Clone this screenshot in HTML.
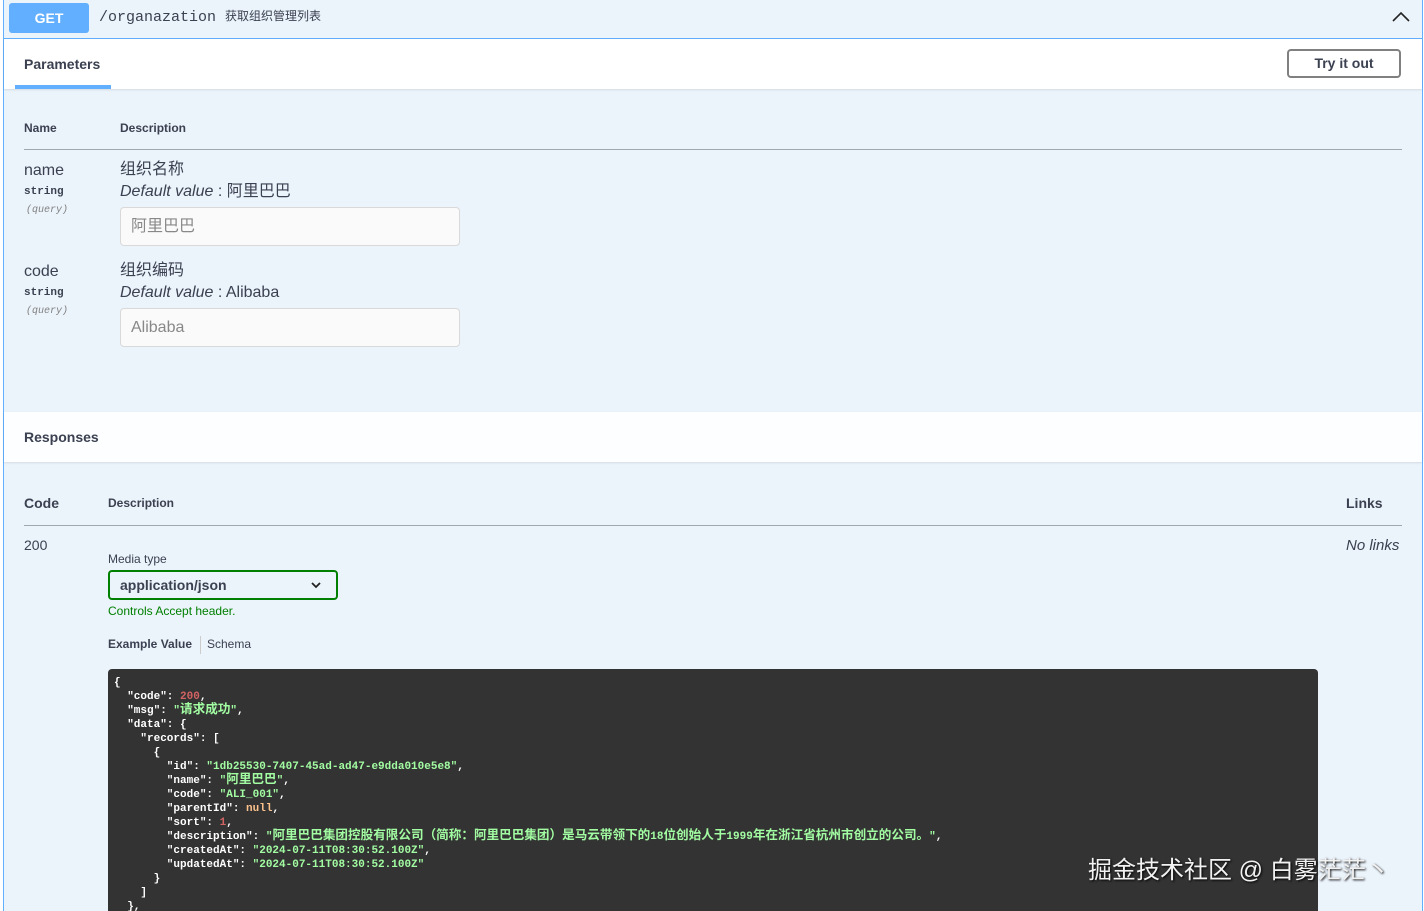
<!DOCTYPE html>
<html><head><meta charset="utf-8"><style>
*{margin:0;padding:0;box-sizing:border-box}
html,body{width:1424px;height:911px;overflow:hidden}
body{background:#fff;font-family:"Liberation Sans","Noto Sans CJK SC",sans-serif;color:#3b4151;position:relative}
.a{position:absolute;white-space:nowrap;line-height:1.15}
.ops{position:absolute;left:3px;top:0;width:1420px;height:911px;background:#ebf3fb;border-left:1px solid #61affe;border-right:1px solid #61affe}
.b{font-weight:bold}
.mono{font-family:"Liberation Mono","Noto Sans CJK SC",monospace}
pre{font-family:"Liberation Mono","Noto Sans CJK SC",monospace;font-size:11px;line-height:14px;font-weight:bold;color:#fff}
.s{color:#a2fca2}.n{color:#d36363}.nu{color:#fcc28c}
.c{font-size:12.6px;line-height:10px}
</style></head><body>
<div class="ops"></div>
<div class="a" style="left:4px;top:38px;width:1418px;height:1px;background:#61affe"></div>
<div class="a" style="left:9px;top:3px;width:80px;height:30px;background:#61affe;border-radius:3px;color:#fff;font-weight:bold;font-size:14px;text-align:center;line-height:30px">GET</div>
<div class="a mono" style="left:99px;top:9px;font-size:15px;color:#3b4151">/organazation</div>
<div class="a" style="left:225px;top:10px;font-size:12px;color:#3b4151">获取组织管理列表</div>
<svg class="a" style="left:1391px;top:10px" width="20" height="14" viewBox="0 0 20 14"><path d="M2 11 L10 3 L18 11" stroke="#222" stroke-width="1.6" fill="none"/></svg>
<div class="a" style="left:4px;top:39px;width:1418px;height:50px;background:#fff;box-shadow:0 1px 2px rgba(0,0,0,.1)"></div>
<div class="a b" style="left:24px;top:56px;font-size:14px">Parameters</div>
<div class="a" style="left:15px;top:85px;width:96px;height:4px;background:#61affe"></div>
<div class="a b" style="left:1287px;top:49px;width:114px;height:29px;border:2px solid #808080;border-radius:4px;font-size:14px;text-align:center;line-height:25px">Try it out</div>
<div class="a b" style="left:24px;top:122px;font-size:12px">Name</div>
<div class="a b" style="left:120px;top:122px;font-size:12px">Description</div>
<div class="a" style="left:24px;top:149px;width:1378px;height:1px;background:#a0a6b0"></div>
<div class="a" style="left:24px;top:162px;font-size:16px">name</div>
<div class="a mono b" style="left:24px;top:186px;font-size:11px">string</div>
<div class="a mono" style="left:26px;top:205px;font-size:10px;font-style:italic;color:#808080">(query)</div>
<div class="a" style="left:120px;top:161px;font-size:16px">组织名称</div>
<div class="a" style="left:120px;top:183px;font-size:16px"><i>Default value</i> : 阿里巴巴</div>
<div class="a" style="left:120px;top:207px;width:340px;height:39px;border:1px solid #d9d9d9;border-radius:4px;background:#fafafa;font-size:16px;color:#888;padding:10px 10px">阿里巴巴</div>
<div class="a" style="left:24px;top:263px;font-size:16px">code</div>
<div class="a mono b" style="left:24px;top:287px;font-size:11px">string</div>
<div class="a mono" style="left:26px;top:306px;font-size:10px;font-style:italic;color:#808080">(query)</div>
<div class="a" style="left:120px;top:262px;font-size:16px">组织编码</div>
<div class="a" style="left:120px;top:284px;font-size:16px"><i>Default value</i> : Alibaba</div>
<div class="a" style="left:120px;top:308px;width:340px;height:39px;border:1px solid #d9d9d9;border-radius:4px;background:#fafafa;font-size:16px;color:#888;padding:10px 10px">Alibaba</div>
<div class="a" style="left:4px;top:412px;width:1418px;height:50px;background:rgba(255,255,255,.85);box-shadow:0 1px 2px rgba(0,0,0,.1)"></div>
<div class="a b" style="left:24px;top:429px;font-size:14px">Responses</div>
<div class="a b" style="left:24px;top:495px;font-size:14px">Code</div>
<div class="a b" style="left:108px;top:497px;font-size:12px">Description</div>
<div class="a b" style="left:1346px;top:495px;font-size:14px">Links</div>
<div class="a" style="left:24px;top:525px;width:1378px;height:1px;background:#a0a6b0"></div>
<div class="a" style="left:24px;top:537px;font-size:14px">200</div>
<div class="a" style="left:1346px;top:537px;font-size:15px;font-style:italic">No links</div>
<div class="a" style="left:108px;top:553px;font-size:12px">Media type</div>
<div class="a b" style="left:108px;top:570px;width:230px;height:30px;border:2px solid #008000;border-radius:4px;font-size:14px;padding:4px 10px;line-height:18px">application/json</div>
<svg class="a" style="left:310px;top:580px" width="12" height="10" viewBox="0 0 12 10"><path d="M2 3 L6 7 L10 3" stroke="#222" stroke-width="1.8" fill="none"/></svg>
<div class="a" style="left:108px;top:605px;font-size:12px;color:#008000">Controls Accept header.</div>
<div class="a b" style="left:108px;top:638px;font-size:12px">Example Value</div>
<div class="a" style="left:200px;top:636px;width:1px;height:18px;background:#ccc"></div>
<div class="a" style="left:207px;top:638px;font-size:12px">Schema</div>
<div class="a" style="left:108px;top:669px;width:1210px;height:242px;overflow:hidden;background:#333;border-radius:4px 4px 0 0;padding:7px 6px">
<pre>{
  "code": <span class="n">200</span>,
  "msg": <span class="s">"<span class="c">请求成功</span>"</span>,
  "data": {
    "records": [
      {
        "id": <span class="s">"1db25530-7407-45ad-ad47-e9dda010e5e8"</span>,
        "name": <span class="s">"<span class="c">阿里巴巴</span>"</span>,
        "code": <span class="s">"ALI_001"</span>,
        "parentId": <span class="nu">null</span>,
        "sort": <span class="n">1</span>,
        "description": <span class="s">"<span class="c">阿里巴巴集团控股有限公司（简称：阿里巴巴集团）是马云带领下的</span>18<span class="c">位创始人于</span>1999<span class="c">年在浙江省杭州市创立的公司。</span>"</span>,
        "createdAt": <span class="s">"2024-07-11T08:30:52.100Z"</span>,
        "updatedAt": <span class="s">"2024-07-11T08:30:52.100Z"</span>
      }
    ]
  },</pre></div>
<div class="a" style="left:1088px;top:857px;font-size:24px;color:#f2f2f2;text-shadow:1px 1px 2px #000">掘金技术社区 @ 白雾茫茫丶</div>
</body></html>
